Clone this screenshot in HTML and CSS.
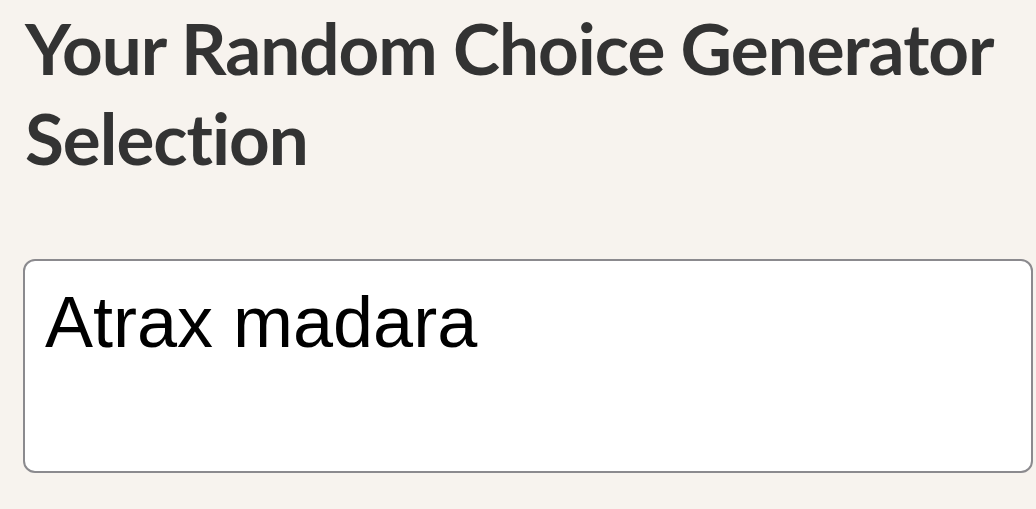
FILE: index.html
```html
<!DOCTYPE html>
<html lang="en">
<head>
  <meta charset="UTF-8">
  <meta name="viewport" content="width=device-width, initial-scale=1.0">
  <title>Your Random Choice Generator Selection</title>
  <link rel="stylesheet" href="styles.css">
</head>
<body>
  <div class="result-panel">
    <h2 class="result-title">Your Random Choice Generator Selection</h2>
    <div class="result-box">Atrax madara</div>
  </div>
</body>
</html>
```

FILE: styles.css
```css
html, body {
  overflow: hidden;
}
body {
  margin: 0;
  background: #f7f3ee;
  font-family: Lato, 'Open Sans', Arial, sans-serif;
}
.result-panel {
  padding: 3px 3px 0 23px;
}
.result-title {
  margin: 0 0 76px 0;
  padding-left: 2px;
  font-size: 71px;
  line-height: 90px;
  font-weight: 700;
  letter-spacing: -1px;
  color: #333;
}
.result-box {
  box-sizing: border-box;
  width: 1010px;
  height: 214px;
  padding: 20px 20px;
  border: 2px solid #8b8a8e;
  border-radius: 12px;
  background: #fff;
  color: #000;
  font-family: 'Liberation Sans', Arial, sans-serif;
  font-size: 72px;
  line-height: 1.15;
}
```
